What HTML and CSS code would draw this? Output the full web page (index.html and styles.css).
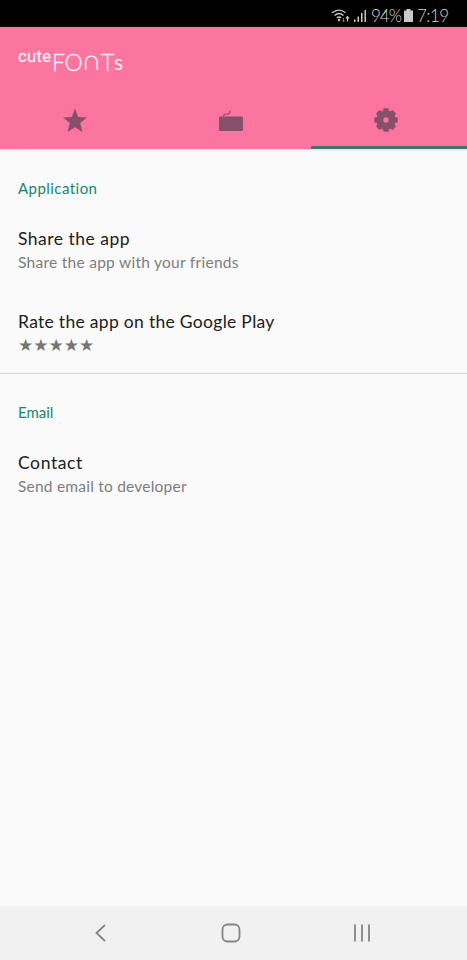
FILE: index.html
```html
<!DOCTYPE html>
<html lang="en">
<head>
<meta charset="utf-8">
<title>cuteFONTs</title>
<link rel="stylesheet" href="styles.css">
</head>
<body>
<div class="status">
  <svg class="wifi" width="20" height="16" viewBox="0 0 20 16" fill="none" stroke="#c9c9c9" stroke-width="1.3"><path d="M1 4.800Q8-.5 14.500 4.800M3.500 7.500Q8 3.500 12.500 7.500M5.800 10Q8 8 10.200 10"/><circle cx="8" cy="12" r="1.200" fill="#c9c9c9" stroke="none"/><path d="M12.500 10v4M11.300 12.500l1.200 1.500 1.200-1.500" stroke="#777" stroke-width="1"/><path d="M16.500 8.500v5M15 10.500l1.500-2 1.500 2" stroke-width="1.200"/></svg>
  <svg class="signal" width="13" height="14" viewBox="0 0 13 14" fill="#c9c9c9"><path d="M0 10.500h1.500v2.500H0zM3.500 7.500H5V13H3.500zM7 4h1.500v9H7zM10.500 1H12v12h-1.500z"/></svg>
  <span class="percent">94%</span>
  <svg class="battery" width="9" height="13" viewBox="0 0 9 13" fill="#c9c9c9"><path d="M2.500 0h4v1.500H9V13H0V1.500h2.500z"/></svg>
  <span class="time">7:19</span>
</div>
<header class="header">
  <h1 class="logo"><span class="cute">cute</span><span class="fo">FO</span><span class="arch">∩</span><span class="tee">T</span><span class="ess">s</span></h1>
  <nav class="tabs">
    <a class="tab"><svg width="26" height="26" viewBox="0 0 26 26" fill="#86506a"><path d="M13 .5l3.200 8.600 8.800.5-6.800 5.500 2.300 8.900-7.500-4.800L5.500 24l2.300-8.900L1 9.600l8.800-.5z"/></svg></a>
    <a class="tab"><svg width="26" height="26" viewBox="0 0 26 26" fill="#86506a"><rect x="1" y="8.500" width="24" height="14.500" rx="1"/><path d="M5.500 8.500q0-2.500 2.500-2.500h2q2 0 2.200-3.500" fill="none" stroke="#86506a" stroke-width="1.200"/></svg></a>
    <a class="tab active"><svg width="26" height="26" viewBox="-13 -12 26 26" fill="#86506a"><path fill-rule="evenodd" d="M-9.800 0a9.800 9.800 0 1 0 19.600 0a9.800 9.800 0 1 0-19.600 0M-2.700 0a2.700 2.700 0 1 1 5.400 0a2.700 2.700 0 1 1-5.400 0"/><g id="teeth"><rect x="-2.800" y="-11.700" width="5.600" height="4.500" rx="1"/><rect x="-2.800" y="7.200" width="5.600" height="4.500" rx="1"/><rect x="-11.700" y="-2.800" width="4.500" height="5.600" rx="1"/><rect x="7.200" y="-2.800" width="4.500" height="5.600" rx="1"/></g><use href="#teeth" transform="rotate(45)"/></svg></a>
  </nav>
</header>
<main class="settings">
  <section class="group">
    <h2 class="heading application">Application</h2>
    <div class="item"><div class="title share">Share the app</div><div class="summary share-sub">Share the app with your friends</div></div>
    <div class="item"><div class="title rate">Rate the app on the Google Play</div><div class="summary stars">★★★★★</div></div>
  </section>
  <section class="group">
    <h2 class="heading email">Email</h2>
    <div class="item"><div class="title contact">Contact</div><div class="summary contact-sub">Send email to developer</div></div>
  </section>
</main>
<footer class="nav">
  <svg width="22" height="22" viewBox="0 0 22 22"><path d="M15 3L6.500 11l8.500 8"/></svg>
  <svg width="22" height="22" viewBox="0 0 22 22"><rect x="2.500" y="2.500" width="17" height="17" rx="5"/></svg>
  <svg width="22" height="22" viewBox="0 0 22 22"><path d="M4 2.500v17M11 2.500v17M18 2.500v17"/></svg>
</footer>
</body>
</html>
```
FILE: styles.css
```css
* { box-sizing: border-box; }
body {
  margin: 0;
  height: 960px;
  display: flex;
  flex-direction: column;
  background: #fafafa;
  font-family: Lato, sans-serif;
  overflow: hidden;
}
.status {
  height: 27px;
  flex: none;
  padding: 4px 19px 0 0;
  background: #000;
  color: #d4d4d4;
  display: flex;
  justify-content: flex-end;
  align-items: center;
  font-size: 17px;
  font-weight: 300;
  line-height: 24px;
}
.wifi { margin-right: 3px; }
.signal { margin-right: 4px; }
.percent { width: 31px; letter-spacing: -1px; }
.battery { margin: 0 4px 0 2px; }
.time { width: 31px; letter-spacing: -0.5px; }
.header {
  height: 122px;
  flex: none;
  background: #fb75a0;
  display: flex;
  flex-direction: column;
  justify-content: space-between;
  box-shadow: 0 1px 2px #d5e0e0;
}
.logo {
  margin: 0;
  padding: 20px 0 0 18px;
  height: 60px;
  display: flex;
  color: #ffe9f3;
  font-size: 23px;
  line-height: 30px;
  font-weight: 300;
  -webkit-text-stroke: 0.3px #ffe9f3;
}
.cute { font: 400 16.500px/20px Roboto, sans-serif; width: 34px; letter-spacing: 0.4px; }
.fo { width: 31px; letter-spacing: -0.3px; }
.arch {
  font-family: "DejaVu Sans", sans-serif;
  font-weight: 200;
  width: 20px;
  font-size: 29px;
  line-height: 26px;
  margin-left: -2px;
  -webkit-text-stroke: 0;
}
.tee { width: 13px; }
.ess { font-weight: 400; font-size: 21px; -webkit-text-stroke: 0; }
.tabs { display: flex; height: 56px; }
.tab {
  flex: 1;
  display: flex;
  justify-content: center;
  padding: 15px 6px 0 0;
  border-bottom: 3px solid transparent;
}
.active { border-bottom-color: #42726f; }
.settings { flex: 1; }
.group { height: 224px; padding: 27px 18px 0; }
.group + .group { border-top: 1px solid #d2d2d2; }
.heading {
  margin: 0 0 27px;
  color: #16876f;
  font-size: 15px;
  line-height: 24px;
  font-weight: 400;
  font-variant-ligatures: none;
}
.group + .group .heading { margin-top: -1px; }
.item { height: 83px; white-space: nowrap; }
.title { color: #202020; font-size: 17.500px; line-height: 24px; }
.summary { color: #7d7d7d; font-size: 15.500px; line-height: 22px; }
.application { letter-spacing: 0.45px; }
.share { letter-spacing: 0.5px; }
.share-sub { letter-spacing: 0.27px; }
.rate { letter-spacing: 0.3px; }
.contact { letter-spacing: 0.6px; }
.contact-sub { letter-spacing: 0.22px; }
.stars { font-family: "DejaVu Sans", sans-serif; color: #757575; font-size: 17px; }
.nav {
  height: 54px;
  flex: none;
  background: #f1f1f1;
  display: flex;
  justify-content: space-between;
  padding: 16px 94px 0 90px;
}
.nav svg { fill: none; stroke: #858585; stroke-width: 1.800; }
.nav svg:nth-child(2) { margin-right: 1px; }
```
